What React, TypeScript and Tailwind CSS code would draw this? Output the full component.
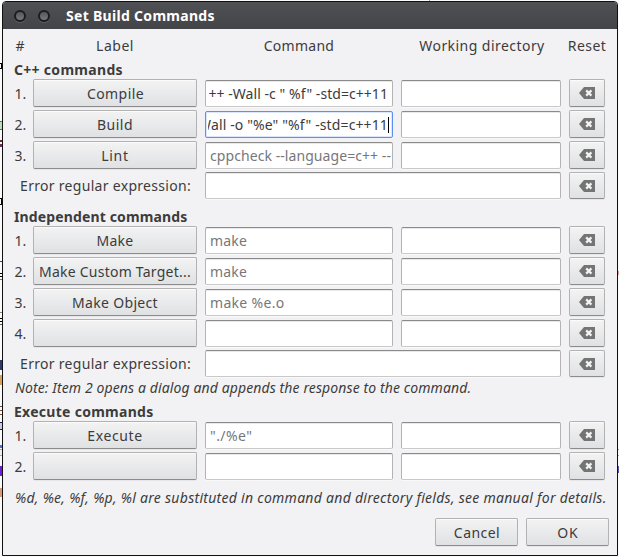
import type { ReactNode } from 'react';

const buttonLook =
  'flex items-center justify-center rounded-[2px] border border-[#b2b2b3] border-b-[#8c8c8d] bg-linear-to-b from-[#f3f3f3] to-[#dfe1e3] shadow-[inset_0_1px_0_#fbfbfb,0_1px_0_#e6e6e8]';

function PushButton({ children, className }: { children?: ReactNode; className: string }) {
  return (
    <button type="button" className={`${buttonLook} ${className}`}>
      {children}
    </button>
  );
}

function Field({ children, focused = false, wide = false }: { children?: ReactNode; focused?: boolean; wide?: boolean }) {
  const border = focused
    ? 'border-[#5b8ff0] shadow-[inset_0_0_0_1px_#dbe7fc]'
    : 'border-[#b3b3b4] border-t-[#8a8a8b] border-b-[#c9c9ca] shadow-[inset_0_1px_0_#e9e9e9,0_1px_0_#f9f9fa]';
  return (
    <div className={`h-[27px] self-end overflow-hidden rounded-[2px] border bg-white pl-[2px] ${border} ${wide ? 'col-span-3' : ''}`}>
      {children}
    </div>
  );
}

function Placeholder({ children, className }: { children: string; className: string }) {
  return (
    <div className={`flex h-full items-center overflow-hidden pl-[2px] whitespace-pre text-[#77777a] ${className}`}>{children}</div>
  );
}

function Reset({ short = false }: { short?: boolean }) {
  return (
    <PushButton className={short ? 'h-[27px]' : 'h-7'}>
      <svg width="16" height="12" viewBox="0 0 16 12" className="block">
        <path d="M0 6 5 0H16V12H5Z" fill="#747474" />
        <path d="M7.2 3.4 12.4 8.6M12.4 3.4 7.2 8.6" stroke="#f4f4f4" strokeWidth="2.2" />
      </svg>
    </PushButton>
  );
}

const grid = 'grid grid-cols-[19px_164px_8px_188px_8px_160px_8px_36px]';

function CommandRow({ n, label, labelClass = '', focused, children }: {
  n: number;
  label?: string;
  labelClass?: string;
  focused?: boolean;
  children?: ReactNode;
}) {
  return (
    <div className={`${grid} h-7`}>
      <div className="flex items-center pt-px pl-[0.5px] tracking-[-0.1px]">{n}.</div>
      <PushButton className={`whitespace-pre pt-px ${labelClass}`}>{label}</PushButton>
      <div />
      <Field focused={focused}>{children}</Field>
      <div />
      <Field />
      <div />
      <Reset />
    </div>
  );
}

function ErrorRow() {
  return (
    <div className={`${grid} h-[27px]`}>
      <div className="col-span-2 flex items-center justify-end pr-[6px] tracking-[0.3px]">Error regular expression:</div>
      <div />
      <Field wide />
      <div />
      <Reset short />
    </div>
  );
}

function Heading({ children, className }: { children: string; className: string }) {
  return <h2 className={`flex items-end pb-[2px] leading-[15px] font-bold whitespace-pre ${className}`}>{children}</h2>;
}

function TitleDot() {
  return <span className="size-[12px] rounded-full border-2 border-[#1d1d1e] bg-linear-to-b from-[#56575a] to-[#77787b] shadow-[0_1px_0_#5e5f62]" />;
}

// Slivers of the editor that stay visible beside the dialog.
const slivers = [
  'top-[63px] h-[6px] border border-l-0 border-black',
  'top-[121px] h-[9px] border-y border-[#3b8f3b] bg-[#b9dfb9]',
  'top-[140px] h-[2px] bg-[#8a2020]',
  'top-[144px] h-[3px] bg-[#6a3058]',
  'top-[198px] h-[7px] border border-l-0 border-black',
  'top-[261px] h-px bg-[#a02020]',
  'top-[273px] h-px bg-black',
  'top-[276px] h-px bg-black',
  'top-[279px] h-px bg-[#777]',
  'top-[312px] h-px bg-[#888]',
  'top-[318px] h-px bg-black',
  'top-[321px] h-px bg-black',
  'top-[324px] h-px bg-[#555]',
  'top-[360px] h-[10px] bg-[#31386f]',
  'top-[375px] h-[10px] bg-[#d8a15c]',
  'top-[406px] h-px bg-[#555]',
  'top-[410px] h-[5px] border-y border-[#85503a]',
  'top-[422px] h-[8px] border-y border-[#1c2358] bg-[#c9cddf]',
  'top-[445px] h-[3px] bg-[#3f78dc]',
  'top-[449px] h-[7px] border-y border-[#aaa] bg-[#eee]',
  'top-[466px] h-[10px] bg-[#6a20d8]',
  'top-[488px] h-[9px] bg-[#d99a74]',
];

export default function App() {
  return (
    <div className="relative h-[557px] w-[619px] overflow-hidden bg-[#f9faf9] pt-px pl-[2px] font-['Noto_Sans','Open_Sans',sans-serif] text-sm text-[#3c3c3c]">
      {slivers.map((s) => (
        <i key={s} className={`absolute left-0 w-[2px] ${s}`} />
      ))}
      <i className="absolute top-0 left-[429px] h-px w-px bg-[#65d865]" />
      <i className="absolute top-[271px] left-[618px] h-[4px] w-px bg-[#dda49b]" />
      <i className="absolute top-[449px] left-[618px] h-[7px] w-px border-y border-[#aaa]" />
      <i className="absolute top-[466px] left-[618px] h-[7px] w-px bg-[#5555a6]" />

      <div className="flex h-[555px] w-[616px] flex-col overflow-hidden rounded-t-[4px] border border-[#111] bg-[#f2f2f4]">
        <header className="flex h-[27px] shrink-0 items-center bg-linear-to-b from-[#505154] to-[#434447] pl-[11px]">
          <TitleDot />
          <span className="w-[12px]" />
          <TitleDot />
          <h1 className="pt-px pl-4 font-bold tracking-[0.3px] whitespace-pre text-white">Set Build Commands</h1>
        </header>

        <main className="flex flex-1 flex-col pl-[11px]">
          <div className={`${grid} h-[34px] items-center text-center whitespace-nowrap`}>
            <div className="pl-[1.5px] text-left">#</div>
            <div className="tracking-[0.5px]">Label</div>
            <div />
            <div className="tracking-[0.27px]">Command</div>
            <div />
            <div className="pl-[2px] tracking-[0.45px]">Working directory</div>
            <div />
            <div className="-mx-2 tracking-[0.45px]">Reset</div>
          </div>

          <Heading className="h-4 tracking-[0.3px]">C++ commands</Heading>
          <section className="flex flex-col gap-[3px]">
            <CommandRow n={1} label="Compile" labelClass="pl-px tracking-[0.41px]">
              <div className="flex h-full items-center justify-end overflow-hidden pr-[4px] tracking-[0.05px] whitespace-pre">
                {'++ -Wall -c " %f" -std=c++11'}
              </div>
            </CommandRow>
            <CommandRow n={2} label="Build" labelClass="tracking-[0.48px]" focused>
              <div className="flex h-full items-center justify-end overflow-hidden pr-[3px] tracking-[0.12px] whitespace-pre">
                {'Wall -o "%e" "%f" -std=c++11'}
                <span className="h-4 w-px shrink-0 bg-black" />
              </div>
            </CommandRow>
            <CommandRow n={3} label="Lint" labelClass="tracking-[0.7px]">
              <Placeholder className="tracking-[0.07px]">cppcheck --language=c++ --</Placeholder>
            </CommandRow>
            <ErrorRow />
          </section>

          <Heading className="h-[27px] tracking-[0.14px]">Independent commands</Heading>
          <section className="flex flex-col gap-[3px]">
            <CommandRow n={1} label="Make" labelClass="tracking-[0.3px]">
              <Placeholder className="tracking-[0.17px]">make</Placeholder>
            </CommandRow>
            <CommandRow n={2} label="Make Custom Target..." labelClass="tracking-[0.24px]">
              <Placeholder className="tracking-[0.17px]">make</Placeholder>
            </CommandRow>
            <CommandRow n={3} label="Make Object" labelClass="tracking-[0.33px]">
              <Placeholder className="tracking-[0.31px]">make %e.o</Placeholder>
            </CommandRow>
            <CommandRow n={4} />
            <ErrorRow />
          </section>
          <p className="flex h-[21px] items-center pl-px tracking-[0.11px] whitespace-nowrap italic">
            Note: Item 2 opens a dialog and appends the response to the command.
          </p>

          <Heading className="h-[23px] tracking-[0.28px]">Execute commands</Heading>
          <section className="flex flex-col gap-[3px]">
            <CommandRow n={1} label="Execute" labelClass="tracking-[0.6px]">
              <Placeholder className="tracking-[0.45px]">"./%e"</Placeholder>
            </CommandRow>
            <CommandRow n={2} />
          </section>
          <p className="flex h-[35px] items-center pl-px tracking-[0.28px] whitespace-nowrap italic">
            %d, %e, %f, %p, %l are substituted in command and directory fields, see manual for details.
          </p>

          <footer className="mt-[3px] flex h-7 justify-end gap-2 pr-[8px]">
            <PushButton className="w-[83px] pt-px pl-px tracking-[0.45px]">Cancel</PushButton>
            <PushButton className="w-[83px] pt-px pl-px tracking-[1px]">OK</PushButton>
          </footer>
        </main>
      </div>
    </div>
  );
}
